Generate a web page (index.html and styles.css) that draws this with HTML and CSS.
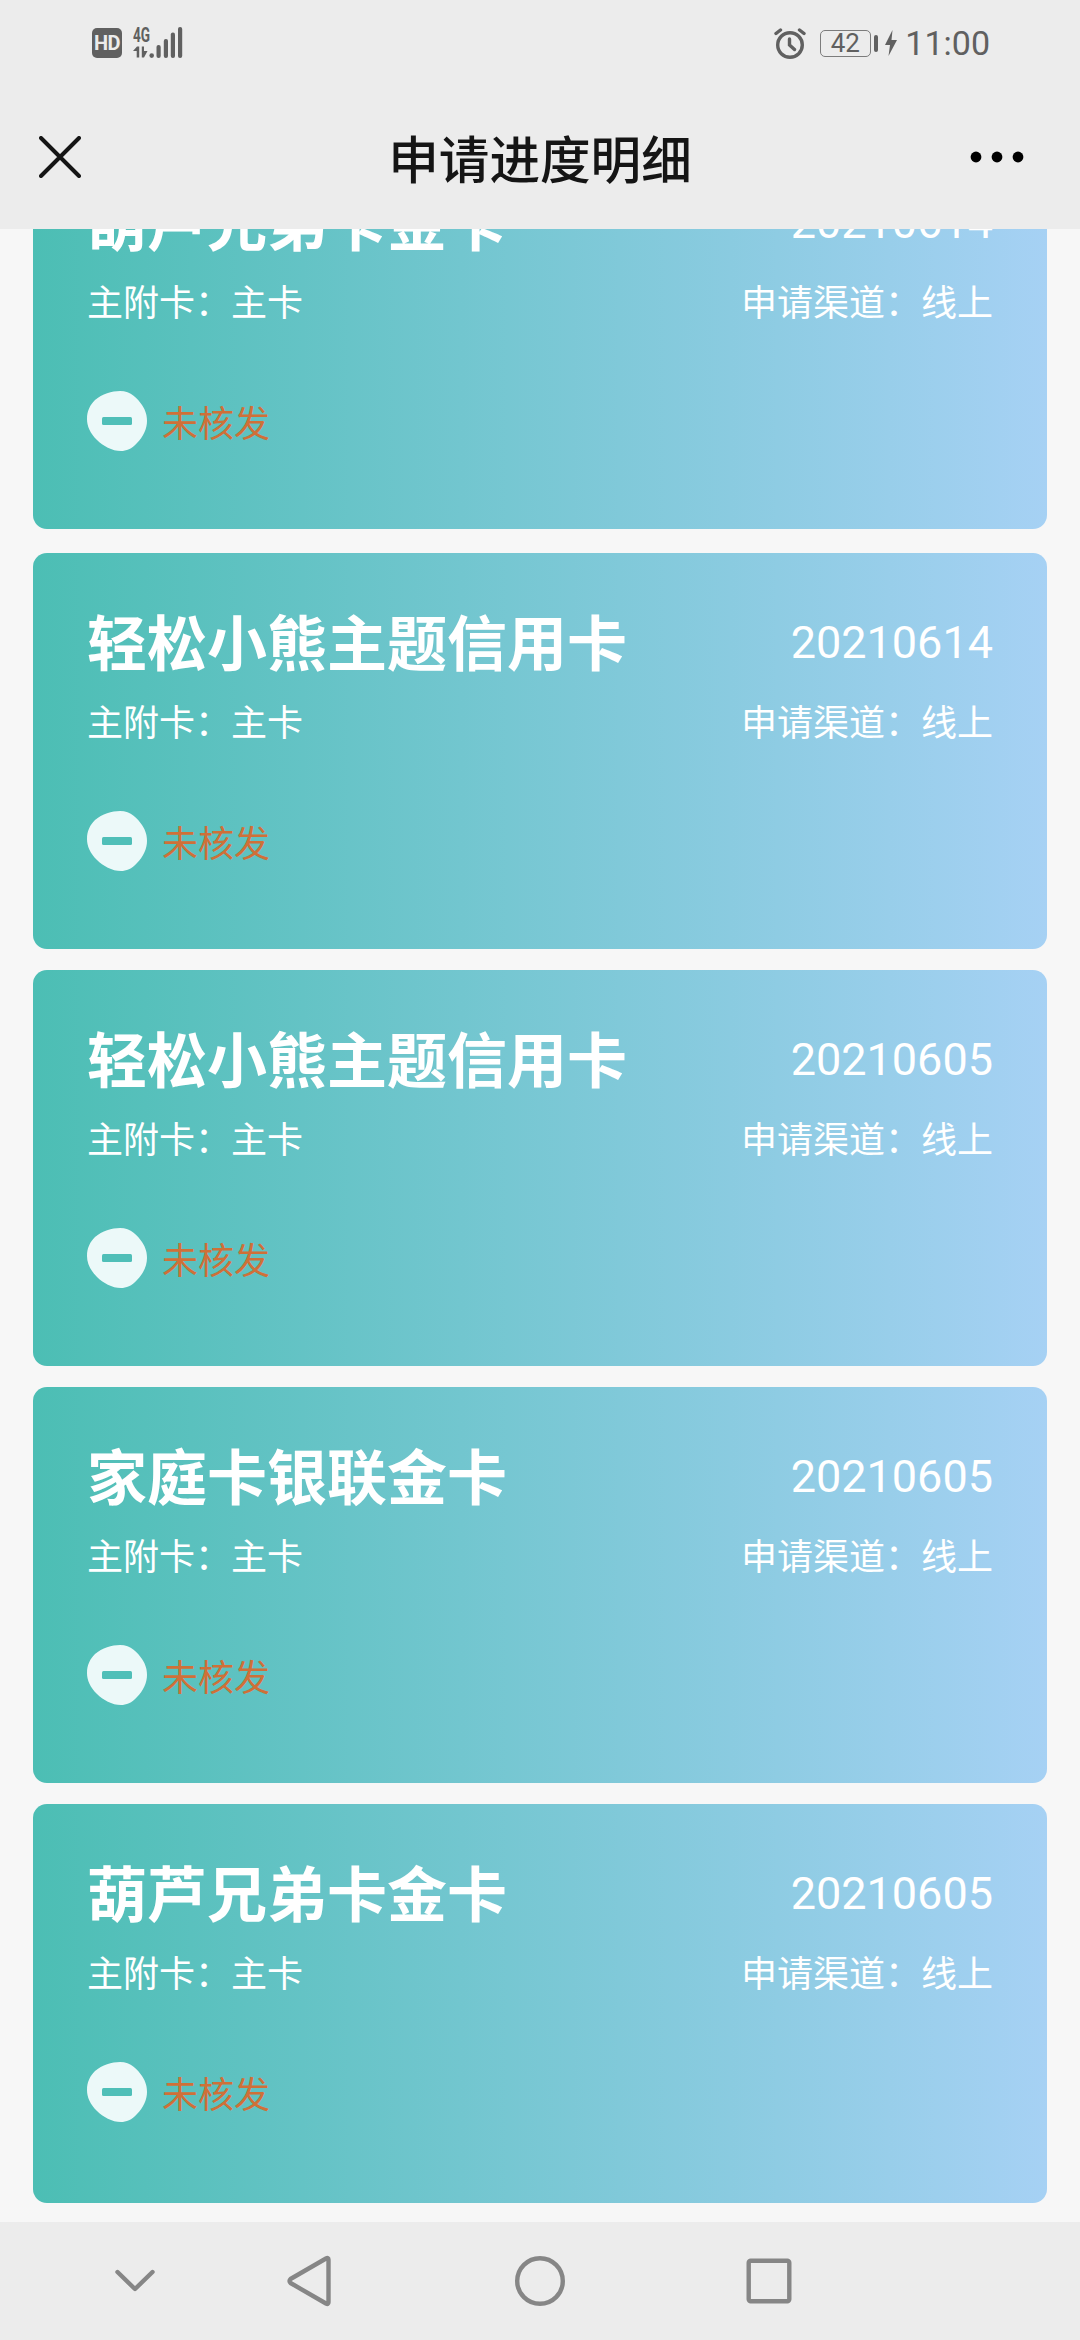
FILE: index.html
```html
<!DOCTYPE html>
<html lang="zh-CN">
<head>
<meta charset="utf-8">
<title>申请进度明细</title>
<link rel="stylesheet" href="styles.css">
</head>
<body>
<svg width="0" height="0" class="defs">
  <symbol id="minus" viewBox="0 0 60 60">
    <path fill="#ecf9f9" d="M33 0C44 0 51 8 55 14C59 20 60 25 60 30C60 38 56 46 50 52C45 58 39 60 34 60C25 60 16 55 10 49C3 42 0 35 0 28C0 20 3 14 8 9C15 3 25 0 33 0Z"/>
    <rect x="15" y="26" width="30" height="8" rx="1.5" fill="#4fbfb8"/>
  </symbol>
</svg>
<div class="screen">
  <div class="status-bar">
    <div class="signals">
      <span class="hd">HD</span>
      <span class="network">
        <span class="gen">4G</span>
        <svg class="bars" width="50" height="31" viewBox="0 0 50 31" fill="#606060">
          <path d="M0 24L4 19.500H6.200V30.500H3.700V24ZM8.800 19.500H11V24H14.500L11 30.500H8.800Z"/>
          <circle cx="18.7" cy="28.6" r="2.3"/>
          <rect x="23.5" y="18" width="4.2" height="13" rx="2"/>
          <rect x="30.8" y="12" width="4.2" height="19" rx="2"/>
          <rect x="37.8" y="5.5" width="4.2" height="25.5" rx="2"/>
          <rect x="45" y="0" width="4.2" height="31" rx="2"/>
        </svg>
      </span>
    </div>
    <div class="system">
      <svg class="alarm" width="32" height="32" viewBox="0 0 32 32" fill="none" stroke="#606060" stroke-width="3.4" stroke-linecap="round">
        <circle cx="16" cy="18" r="12.3"/>
        <path d="M15.500 12V18L20.500 22.500M2 6.500L6.500 3M30 6.500L25.500 3"/>
      </svg>
      <span class="battery">42</span>
      <span class="nub"></span>
      <svg class="bolt" width="12" height="26" viewBox="0 0 12 26"><path fill="#606060" d="M7.500 0L0 15H5L3.500 26L12 10H6.500Z"/></svg>
      <span class="clock">11:00</span>
    </div>
  </div>
  <header class="title-bar">
    <svg width="42" height="42" viewBox="0 0 42 42" fill="none" stroke="#151515" stroke-width="4" stroke-linecap="round"><path d="M2 2L40 40M40 2L2 40"/></svg>
    <h1>申请进度明细</h1>
    <svg width="54" height="12" viewBox="0 0 54 12"><circle cx="6" cy="6" r="5.400"/><circle cx="27" cy="6" r="5.400"/><circle cx="48" cy="6" r="5.400"/></svg>
  </header>
  <main class="list">
    <section class="card first">
      <div class="row head"><h2>葫芦兄弟卡金卡</h2><time>20210614</time></div>
      <div class="row meta"><span>主附卡：主卡</span><span>申请渠道：线上</span></div>
      <div class="result"><svg width="60" height="60"><use href="#minus"/></svg><span>未核发</span></div>
    </section>
    <section class="card">
      <div class="row head"><h2>轻松小熊主题信用卡</h2><time>20210614</time></div>
      <div class="row meta"><span>主附卡：主卡</span><span>申请渠道：线上</span></div>
      <div class="result"><svg width="60" height="60"><use href="#minus"/></svg><span>未核发</span></div>
    </section>
    <section class="card">
      <div class="row head"><h2>轻松小熊主题信用卡</h2><time>20210605</time></div>
      <div class="row meta"><span>主附卡：主卡</span><span>申请渠道：线上</span></div>
      <div class="result"><svg width="60" height="60"><use href="#minus"/></svg><span>未核发</span></div>
    </section>
    <section class="card">
      <div class="row head"><h2>家庭卡银联金卡</h2><time>20210605</time></div>
      <div class="row meta"><span>主附卡：主卡</span><span>申请渠道：线上</span></div>
      <div class="result"><svg width="60" height="60"><use href="#minus"/></svg><span>未核发</span></div>
    </section>
    <section class="card last">
      <div class="row head"><h2>葫芦兄弟卡金卡</h2><time>20210605</time></div>
      <div class="row meta"><span>主附卡：主卡</span><span>申请渠道：线上</span></div>
      <div class="result"><svg width="60" height="60"><use href="#minus"/></svg><span>未核发</span></div>
    </section>
  </main>
  <nav class="nav-bar">
    <svg width="40" height="24" viewBox="0 0 40 24"><path d="M2.500 3L20 20L37.500 3"/></svg>
    <svg width="44" height="52" viewBox="0 0 44 52"><path d="M39 3.500Q41.500 2.200 41.500 4.800V47.200Q41.500 49.800 39 48.500L3.500 28Q1.500 26 3.500 24Z"/></svg>
    <svg width="52" height="52" viewBox="0 0 52 52"><circle cx="26" cy="26" r="22.800"/></svg>
    <svg width="46" height="46" viewBox="0 0 46 46"><rect x="2.700" y="2.700" width="40.600" height="40.600" rx="2"/></svg>
  </nav>
</div>
</body>
</html>
```
FILE: styles.css
```css
* { box-sizing: border-box; }
body { margin: 0; background: #f7f7f7; font-family: "Noto Sans CJK SC", sans-serif; }
svg { display: block; flex: none; }
.defs { height: 0; }
h1, h2 { margin: 0; }
.screen { width: 1080px; height: 2340px; display: flex; flex-direction: column; overflow: hidden; }

.status-bar { height: 86px; flex: none; padding: 0 92px; display: flex; justify-content: space-between; background: #ececec; color: #606060; font-family: Roboto, sans-serif; }
.signals, .system { display: flex; align-items: center; }
.signals { gap: 11px; }
.hd { width: 30px; height: 30px; border-radius: 5px; background: #606060; color: #ececec; font-size: 20px; font-weight: 700; line-height: 31px; text-align: center; letter-spacing: -0.5px; }
.network { display: grid; width: 50px; height: 31px; margin-top: -2px; }
.gen, .bars { grid-area: 1 / 1; }
.gen { font-size: 20px; font-weight: 700; line-height: 16px; transform: scaleX(0.68); transform-origin: left; }
.alarm { margin-right: 14px; }
.battery { width: 51px; height: 27px; border: 1.500px solid #7c7c7c; border-radius: 5px; font-size: 26px; line-height: 25px; text-align: center; }
.nub { width: 4.500px; height: 17px; margin-left: 3px; margin-right: 7px; border-radius: 2px; background: #606060; }
.clock { margin-left: 8px; margin-right: -2px; font-size: 34px; line-height: 40px; }

.title-bar { height: 143px; flex: none; padding: 0 56px 0 39px; display: grid; grid-template-columns: 54px 1fr 54px; align-items: center; background: #ececec; }
.title-bar svg { position: relative; top: -0.5px; }
.title-bar h1 { margin-left: 17px; padding-bottom: 2px; text-align: center; font-size: 50.600px; font-weight: 500; line-height: 70px; color: #151515; }

.list { flex: 1; min-height: 0; padding: 0 33px; overflow: hidden; }
.card { height: 395.500px; margin-bottom: 21.500px; padding: 57px 54px 0; border-radius: 14px; background: linear-gradient(90deg, #4cbeb4, #a6d1f4); color: #fff; }
.first { margin-top: -96px; margin-bottom: 24.500px; }
.last { height: 399px; }
.row { display: flex; justify-content: space-between; align-items: center; }
.head { height: 60px; }
.head h2 { font-size: 60px; font-weight: 700; line-height: 60px; white-space: nowrap; }
.head time { font-family: Roboto, sans-serif; font-size: 45px; line-height: 54px; padding-top: 6px; }
.meta { margin-top: 30px; font-size: 36px; line-height: 40px; }
.result { display: flex; align-items: center; gap: 15px; margin-top: 71px; height: 60px; font-size: 36px; line-height: 60px; color: #cf7038; }

.nav-bar { height: 118px; flex: none; padding: 0 288px 0 115px; display: grid; grid-template-columns: 171.500px 227.500px 232px 46px; align-items: center; background: #ececec; fill: none; stroke: #868686; stroke-width: 4.400px; stroke-linecap: round; stroke-linejoin: round; }
```
